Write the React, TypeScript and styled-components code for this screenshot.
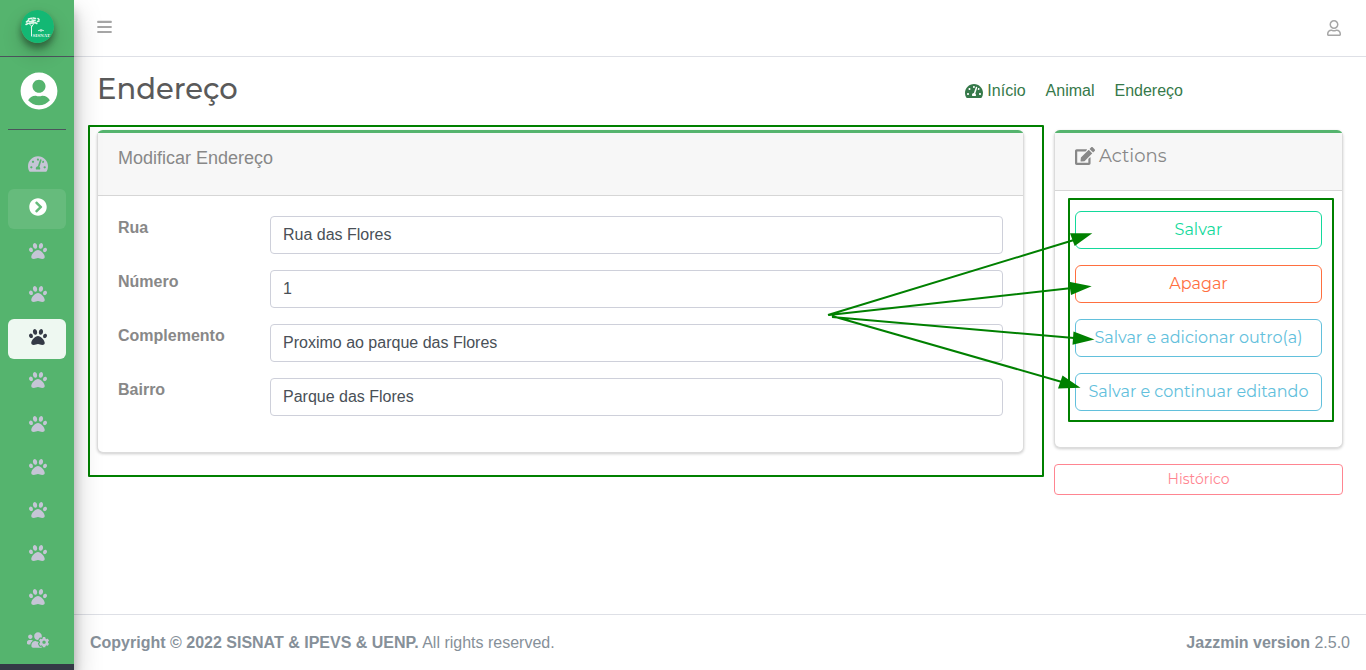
import React from "react";
import styled, { createGlobalStyle } from "styled-components";
import {
  FaChevronCircleRight,
  FaEdit,
  FaPaw,
  FaRegUser,
  FaTachometerAlt,
  FaUserCircle,
  FaUsersCog,
} from "react-icons/fa";

const green = "#55b46e";
const display = `"Montserrat", "Inter", "Open Sans", sans-serif`;
const body = `"Liberation Sans", Arial, sans-serif`;

const GlobalStyle = createGlobalStyle`
  *, *::before, *::after { box-sizing: border-box; }
  body {
    margin: 0;
    background: #fff;
    color: #888;
    font: 400 16px/24px ${body};
  }
`;

const Shell = styled.div`
  display: flex;
  min-height: 100vh;
`;

const Sidebar = styled.aside`
  position: relative;
  z-index: 2;
  flex: none;
  display: flex;
  flex-direction: column;
  width: 74px;
  background: ${green};
  border-bottom: 6px solid #343a46;
  box-shadow: 0 14px 28px rgba(0, 0, 0, 0.25), 0 10px 10px rgba(0, 0, 0, 0.22);
`;

const Brand = styled.a`
  display: flex;
  padding: 10px 0 12px 21px;
  height: 57px;
  border-bottom: 1px solid #4b545c;

  svg {
    width: 33px;
    height: 33px;
    border-radius: 50%;
    box-shadow: 0 3px 6px rgba(0, 0, 0, 0.16), 0 10px 20px rgba(0, 0, 0, 0.19),
      0 6px 6px rgba(0, 0, 0, 0.23);
  }
`;

const UserPanel = styled.a`
  display: flex;
  margin: 0 8px;
  padding: 15px 0 19px 12px;
  height: 73px;
  color: #fff;
  font-size: 38px;
  border-bottom: 1px solid #4b545c;
`;

const Nav = styled.nav`
  flex: 1;
  display: flex;
  flex-direction: column;
  justify-content: space-between;
  padding: 16px 8px 2px;
`;

const NavItem = styled.a<{ $state?: "open" | "active" }>`
  display: flex;
  align-items: center;
  justify-content: center;
  height: 40px;
  padding: 0 0 4px 1px;
  border-radius: 6px;
  font-size: 18px;
  color: ${(p) =>
    p.$state === "active" ? "#343a46" : p.$state === "open" ? "#fff" : "#c5c5d6"};
  background: ${(p) =>
    p.$state === "active"
      ? "rgba(255, 255, 255, 0.9)"
      : p.$state === "open"
        ? "rgba(255, 255, 255, 0.1)"
        : "transparent"};
`;

const Page = styled.div`
  flex: 1;
  min-width: 0;
  display: flex;
  flex-direction: column;
`;

const TopBar = styled.header`
  display: flex;
  align-items: center;
  justify-content: space-between;
  height: 57px;
  padding: 0 25px 1px 23px;
  border-bottom: 1px solid #dee0e6;
`;

const IconButton = styled.button`
  display: flex;
  padding: 0;
  border: 0;
  background: none;
  color: #a6a6a6;
`;

const Main = styled.main`
  flex: 1;
  padding: 0 23px;
`;

const TitleRow = styled.div`
  display: flex;
  justify-content: space-between;
  padding: 12px 160px 21px 0;
`;

const Title = styled.h1`
  margin: 0;
  color: #5a5a5a;
  font: 500 29px/40px ${display};
`;

const Crumbs = styled.nav`
  display: flex;
  align-items: flex-end;
  gap: 20px;
  padding-bottom: 6px;
`;

const Crumb = styled.a`
  display: flex;
  align-items: center;
  gap: 4px;
  color: #36794a;
  text-decoration: none;

  svg {
    font-size: 18px;
  }
`;

const Columns = styled.form`
  display: grid;
  grid-template-columns: repeat(12, 1fr);
  gap: 30px;
  align-items: start;
`;

const Column = styled.div<{ $span: number }>`
  position: relative;
  grid-column: span ${(p) => p.$span};
`;

const Card = styled.section`
  border: 1px solid #dcdcdc;
  border-top: 3px solid ${green};
  border-radius: 6px;
  background: #fff;
  box-shadow: 0 1px 3px rgba(0, 0, 0, 0.2);
`;

const CardHeader = styled.header<{ $display?: boolean }>`
  padding: ${(p) => (p.$display ? "11px" : "13px")} 20px 0;
  height: ${(p) => (p.$display ? "58px" : "63px")};
  background: #f7f7f7;
  border-bottom: 1px solid #d6d6d6;
`;

const CardTitle = styled.h2<{ $display?: boolean }>`
  display: flex;
  align-items: center;
  gap: 4px;
  margin: 0;
  color: #888;
  font: 400 18px/24px ${(p) => (p.$display ? display : body)};

  svg {
    font-size: 20px;
  }
`;

const CardBody = styled.div`
  padding: 20px 20px 36px;
`;

const Fields = styled.div`
  display: grid;
  gap: 16px;
`;

const Field = styled.div`
  display: grid;
  grid-template-columns: 152px 1fr;
`;

const Label = styled.label`
  font-weight: 700;
`;

const Input = styled.input`
  width: 100%;
  height: 38px;
  padding: 0 12px;
  border: 1px solid #ced0da;
  border-radius: 4px;
  background: #fff;
  color: #495057;
  font: 400 16px/24px ${body};
`;

const Actions = styled.div`
  position: relative;
  display: grid;
  gap: 16px;
`;

const ActionButton = styled.button<{ $tone: string; $small?: boolean }>`
  width: 100%;
  height: ${(p) => (p.$small ? 31 : 38)}px;
  margin-top: ${(p) => (p.$small ? 16 : 0)}px;
  padding: ${(p) => (p.$small ? "0 0 2px" : "0")};
  border: 1px solid ${(p) => p.$tone};
  border-radius: ${(p) => (p.$small ? 4 : 6)}px;
  background: transparent;
  color: ${(p) => p.$tone};
  font: 400 ${(p) => (p.$small ? 14 : 16)}px/24px ${display};
  white-space: nowrap;
`;

const Highlight = styled.div<{ $inset: string }>`
  position: absolute;
  inset: ${(p) => p.$inset};
  border: 2px solid #008000;
  border-radius: 1px;
  pointer-events: none;
`;

const Arrows = styled.svg`
  position: absolute;
  top: 0;
  left: -251px;
  pointer-events: none;
`;

const Footer = styled.footer`
  display: flex;
  justify-content: space-between;
  padding: 16px 16px 15px;
  border-top: 1px solid #dee0e6;
  color: #869099;
`;

function MenuIcon() {
  return (
    <svg width="15" height="16" viewBox="0 0 15 16" fill="currentColor" aria-hidden="true">
      <rect x="0.3" y="0.800" width="14.400" height="2.200" rx="0.500" />
      <rect x="0.3" y="5.900" width="14.400" height="2.200" rx="0.500" />
      <rect x="0.3" y="10.900" width="14.400" height="2.200" rx="0.500" />
    </svg>
  );
}

function Logo() {
  return (
    <svg viewBox="0 0 33 33" aria-label="SISNAT">
      <circle cx="16.5" cy="16.5" r="16.5" fill="#13b874" />
      <g fill="none" stroke="#e4f7ec" strokeLinecap="round">
        <path d="M10.500 26V16l-2-2M10.500 17l2-3" strokeWidth="1" />
        <path
          d="M5 14.500l2-1M5.500 12l2-1.500M7.500 9l3-.8M11 10l3 .5M8.500 11.500l4 .3M8 13.300l5-.3M14 12.500l1.800 1M12 8l2.500.5M17 8.500l1 1M16.500 11.500l1.500-.5"
          strokeWidth="1.600"
        />
        <path d="M17.500 20.500q2.500-1.500 5 0M20 20v1.500" strokeWidth="1" />
      </g>
      <text x="11.500" y="26.500" fill="#e4f7ec" fontSize="5" fontWeight="700" fontFamily="Liberation Serif, serif">
        SISNAT
      </text>
    </svg>
  );
}

const fields = [
  { id: "rua", label: "Rua", value: "Rua das Flores" },
  { id: "numero", label: "Número", value: "1" },
  { id: "complemento", label: "Complemento", value: "Proximo ao parque das Flores" },
  { id: "bairro", label: "Bairro", value: "Parque das Flores" },
];

const actions = [
  { label: "Salvar", tone: "#13d99b" },
  { label: "Apagar", tone: "#ff6f3f" },
  { label: "Salvar e adicionar outro(a)", tone: "#62c0dc" },
  { label: "Salvar e continuar editando", tone: "#62c0dc" },
];

const paws: ("active" | undefined)[] = [
  undefined,
  undefined,
  "active",
  undefined,
  undefined,
  undefined,
  undefined,
  undefined,
  undefined,
];

export default function App() {
  return (
    <Shell>
      <GlobalStyle />
      <Sidebar>
        <Brand href="#">
          <Logo />
        </Brand>
        <UserPanel href="#" aria-label="Perfil">
          <FaUserCircle />
        </UserPanel>
        <Nav>
          <NavItem href="#">
            <FaTachometerAlt size={20} />
          </NavItem>
          <NavItem href="#" $state="open">
            <FaChevronCircleRight />
          </NavItem>
          {paws.map((state, i) => (
            <NavItem key={i} href="#" $state={state}>
              <FaPaw />
            </NavItem>
          ))}
          <NavItem href="#">
            <FaUsersCog size={22} />
          </NavItem>
        </Nav>
      </Sidebar>
      <Page>
        <TopBar>
          <IconButton aria-label="Menu">
            <MenuIcon />
          </IconButton>
          <IconButton aria-label="Conta">
            <FaRegUser style={{ width: 14, height: 16 }} />
          </IconButton>
        </TopBar>
        <Main>
          <TitleRow>
            <Title>Endereço</Title>
            <Crumbs>
              <Crumb href="#">
                <FaTachometerAlt />
                Início
              </Crumb>
              <Crumb href="#">Animal</Crumb>
              <Crumb href="#">Endereço</Crumb>
            </Crumbs>
          </TitleRow>
          <Columns onSubmit={(e) => e.preventDefault()}>
            <Column $span={9}>
              <Card>
                <CardHeader>
                  <CardTitle>Modificar Endereço</CardTitle>
                </CardHeader>
                <CardBody>
                  <Fields>
                    {fields.map((f) => (
                      <Field key={f.id}>
                        <Label htmlFor={f.id}>{f.label}</Label>
                        <Input id={f.id} defaultValue={f.value} />
                      </Field>
                    ))}
                  </Fields>
                </CardBody>
              </Card>
              <Highlight $inset="-5px -20px -24px -9px" />
            </Column>
            <Column $span={3}>
              <Card>
                <CardHeader $display>
                  <CardTitle $display>
                    <FaEdit />
                    Actions
                  </CardTitle>
                </CardHeader>
                <CardBody>
                  <Actions>
                    {actions.map((a) => (
                      <ActionButton key={a.label} $tone={a.tone}>
                        {a.label}
                      </ActionButton>
                    ))}
                    <Highlight $inset="-13px -12px -11px -7px" />
                    <Arrows width="280" height="200" aria-hidden="true">
                      <g stroke="#008000" strokeWidth="2">
                        <path d="M4 104L250 29M5 104L248 77M8 106L250 127M8 105L238 171" />
                      </g>
                      <g fill="#008000">
                        <path d="M268.300 22.300L246 22.300L250.700 35Z" />
                        <path d="M267.700 75.300L245 70.700L247 84Z" />
                        <path d="M270.500 128.500L249.500 120.500L248.500 133.700Z" />
                        <path d="M256.500 176.800L238.500 164.500L234 177.500Z" />
                      </g>
                    </Arrows>
                  </Actions>
                </CardBody>
              </Card>
              <ActionButton $tone="#ff8591" $small>
                Histórico
              </ActionButton>
            </Column>
          </Columns>
        </Main>
        <Footer>
          <span>
            <strong>Copyright © 2022 SISNAT &amp; IPEVS &amp; UENP.</strong> All rights reserved.
          </span>
          <span>
            <strong>Jazzmin version</strong> 2.5.0
          </span>
        </Footer>
      </Page>
    </Shell>
  );
}
